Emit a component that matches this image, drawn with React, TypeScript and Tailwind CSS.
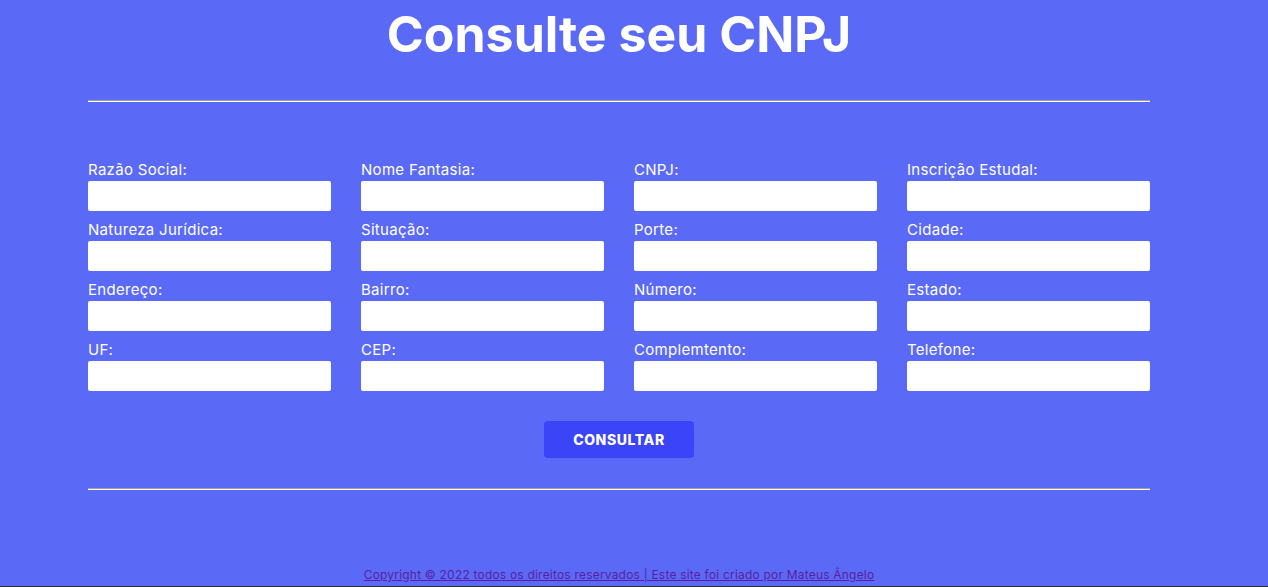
import React from "react";

const fields = [
  ["Razão Social:", "Nome Fantasia:", "CNPJ:", "Inscrição Estudal:"],
  ["Natureza Jurídica:", "Situação:", "Porte:", "Cidade:"],
  ["Endereço:", "Bairro:", "Número:", "Estado:"],
  ["UF:", "CEP:", "Complemtento:", "Telefone:"],
];

export default function App() {
  return (
    <div
      className="w-[1268px] h-[587px] bg-[#5b6af6] overflow-hidden flex flex-col border-b border-[#2a2a2a]"
      style={{ fontFamily: "Inter, 'Open Sans', sans-serif" }}
    >
      <div className="ml-[88px] w-[1062px] flex flex-col">
        <h1 className="text-center text-white font-bold text-[50px] leading-[68px] tracking-[0px]">
          Consulte seu CNPJ
        </h1>
        <div className="mt-[32px] h-[2px] border-t border-[#a0a0a0] border-b border-b-white" />
        <div className="mt-[59px] grid grid-cols-4 gap-x-[30px]">
          {fields.flat().map((f) => (
            <div key={f} className="flex flex-col">
              <label className="text-white text-[15px] leading-[17px] h-[20px] tracking-[0.3px]">{f}</label>
              <input className="h-[30px] bg-white rounded-[2px] mt-[0px] mb-[10px] outline-none" />
            </div>
          ))}
        </div>
        <div className="flex justify-center mt-[20px]">
          <button className="w-[150px] h-[37px] rounded-[4px] bg-[#3c44f7] text-white text-[14px] font-extrabold tracking-[0.6px]">
            CONSULTAR
          </button>
        </div>
        <div className="mt-[30px] h-[2px] border-t border-[#a0a0a0] border-b border-b-white" />
      </div>
      <div className="flex-1" />
      <div className="ml-[88px] w-[1062px] text-center">
        <a href="#" className="text-[#5a1fa0] underline text-[12px] leading-[16px] tracking-[0.2px]">
          Copyright © 2022 todos os direitos reservados | Este site foi criado por Mateus Ângelo
        </a>
      </div>
      <div className="h-[1px]" />
    </div>
  );
}
